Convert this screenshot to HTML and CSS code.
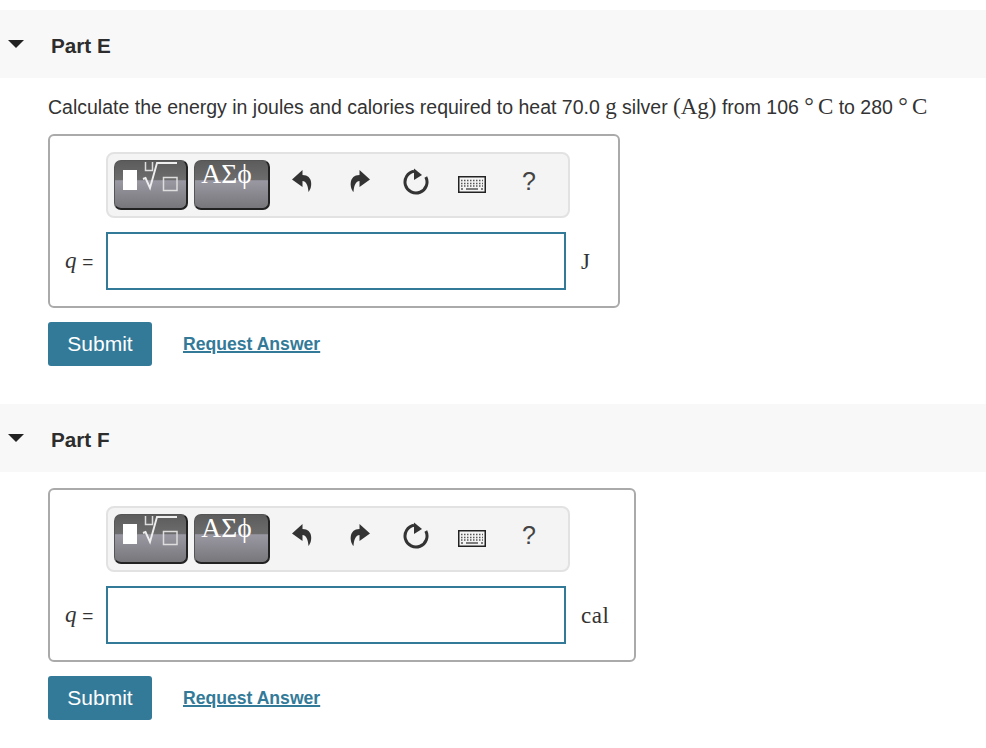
FILE: index.html
```html
<!DOCTYPE html>
<html>
    <head>
        <meta charset="UTF-8">
        <title>Part E and F</title>
        <link rel="stylesheet" href="styles.css">
    </head>

    <body>
        <svg class="defs" width="0" height="0">
            <defs>
                <symbol id="i-undo" viewBox="0 0 24 24">
                    <path d="M11.500 1 L1 10.500 L11.500 18 V12 C15 12 17 16 17.500 23 C21.500 19 22.500 6 11.500 6 Z"/>
                </symbol>
                <symbol id="i-redo" viewBox="0 0 24 24">
                    <path d="M12.500 1 L23 10.500 L12.500 18 V12 C9 12 7 16 6.500 23 C2.500 19 1.500 6 12.500 6 Z"/>
                </symbol>
                <symbol id="i-reset" viewBox="0 0 26 28">
                    <path class="ring" d="M22.800 9 A11 11 0 1 1 11 3.200"/>
                    <path d="M11 0.500 L19 7 L11 12 Z"/>
                </symbol>
                <symbol id="i-keys" viewBox="0 0 28 17">
                    <rect class="case" x="0.750" y="0.750" width="26.500" height="15.500"/>
                    <path class="keys" d="M3 4.500 H25 M3 7.500 H25 M3 10 H25" stroke-dasharray="1.500 1.500"/>
                    <path class="keys" d="M3 13 H5 M8 13 H20 M23 13 H25"/>
                </symbol>
                <symbol id="i-tmpl" viewBox="0 0 74 50">
                    <rect class="t-solid" x="9" y="10" width="14" height="20"/>
                    <path class="t-line" d="M31.500 2 V10.500 H38.500 V2"/>
                    <path class="t-line t-root" d="M29 19 L31.500 18 L36 28 L43 3 H63"/>
                    <rect class="t-line" x="49.500" y="17.500" width="13.500" height="13"/>
                </symbol>
            </defs>
        </svg>

        <section class="part">
            <header class="part-head">
                <span class="caret"></span>
                <h2>Part E</h2>
            </header>
            <div class="part-body">
                <p class="prompt">Calculate the energy in joules and calories required to heat 70.0 <span class="math">g</span> silver <span class="math">(Ag)</span> from 106 <span class="math"><sup>°</sup>C</span> to 280 <span class="math"><sup>°</sup>C</span></p>
                <div class="answer-box">
                    <div class="toolbar">
                        <div class="tool-btn tmpl"><svg width="74" height="50"><use href="#i-tmpl"/></svg></div>
                        <div class="tool-btn greek">ΑΣϕ</div>
                        <svg class="ico undo" width="24" height="24"><use href="#i-undo"/></svg>
                        <svg class="ico redo" width="24" height="24"><use href="#i-redo"/></svg>
                        <svg class="ico reset" width="26" height="28"><use href="#i-reset"/></svg>
                        <svg class="ico keyb" width="28" height="17"><use href="#i-keys"/></svg>
                        <span class="help">?</span>
                    </div>
                    <label class="var"><i>q</i> <span class="eq">=</span></label>
                    <input class="answer" type="text">
                    <span class="unit">J</span>
                </div>
                <div class="actions">
                    <button class="submit">Submit</button>
                    <a class="req" href="#">Request Answer</a>
                </div>
            </div>
        </section>

        <section class="part">
            <header class="part-head">
                <span class="caret"></span>
                <h2>Part F</h2>
            </header>
            <div class="part-body">
                <div class="answer-box">
                    <div class="toolbar">
                        <div class="tool-btn tmpl"><svg width="74" height="50"><use href="#i-tmpl"/></svg></div>
                        <div class="tool-btn greek">ΑΣϕ</div>
                        <svg class="ico undo" width="24" height="24"><use href="#i-undo"/></svg>
                        <svg class="ico redo" width="24" height="24"><use href="#i-redo"/></svg>
                        <svg class="ico reset" width="26" height="28"><use href="#i-reset"/></svg>
                        <svg class="ico keyb" width="28" height="17"><use href="#i-keys"/></svg>
                        <span class="help">?</span>
                    </div>
                    <label class="var"><i>q</i> <span class="eq">=</span></label>
                    <input class="answer" type="text">
                    <span class="unit">cal</span>
                </div>
                <div class="actions">
                    <button class="submit">Submit</button>
                    <a class="req" href="#">Request Answer</a>
                </div>
            </div>
        </section>
    </body>
</html>
```

FILE: styles.css
```css
*{
    box-sizing: border-box;
}

body{
    margin: 0;
    padding-top: 10px;
    background-color: #fff;
    color: #333;
    font-family: "Liberation Sans", Arial, sans-serif;
}

.defs{
    display: block;
    height: 0;
}

/* Part headers */
.part{
    margin-bottom: 38px;
}

.part-head{
    display: flex;
    align-items: center;
    height: 68px;
    padding-left: 8px;
    background-color: #f8f8f8;
}

.caret{
    width: 0;
    height: 0;
    border-left: 8px solid transparent;
    border-right: 8px solid transparent;
    border-top: 8px solid #222;
}

.part-head h2{
    margin: 4px 0 0 27px;
    font-size: 20.700px;
    font-weight: bold;
    color: #2d2d2d;
}

.part-body{
    padding: 16px 0 0 48px;
}

.prompt{
    margin: 0 0 14px;
    font-size: 19.500px;
    line-height: 26px;
    white-space: nowrap;
}

.math{
    font-family: "Liberation Serif", serif;
    font-size: 23px;
}

.math sup{
    margin-right: 4px;
    font-size: 24px;
    line-height: 0;
    vertical-align: 0;
}

/* Answer box */
.answer-box{
    display: grid;
    grid-template-columns: 26px 460px auto;
    column-gap: 15px;
    align-items: center;
    width: fit-content;
    padding: 16px 25px 16px 15px;
    border: 2px solid #aaa;
    border-radius: 6px;
}

.toolbar{
    grid-column: 2 / 4;
    display: flex;
    align-items: flex-start;
    width: 464px;
    height: 66px;
    margin-bottom: 14px;
    padding: 6px;
    background-color: #f4f4f4;
    border: 2px solid #e2e2e2;
    border-radius: 8px;
}

.tool-btn{
    height: 50px;
    border: 1px solid #555;
    border-right: 2px solid #222;
    border-bottom: 2px solid #222;
    border-radius: 7px;
    background: linear-gradient(#5c5c5c 0, #6c6c6c 40%, #9a98a2 42%, #77777b 100%);
    color: #fff;
}

.tmpl{
    width: 74px;
    margin-right: 6px;
}

.tmpl svg{
    display: block;
    margin: -1px 0 0 -1px;
}

.t-solid{
    fill: #fff;
}

.t-line{
    fill: none;
    stroke: #ddd;
    stroke-width: 1.500;
}

.t-root{
    stroke: #eee;
    stroke-width: 1.900;
}

.greek{
    width: 76px;
    padding-right: 10px;
    font-family: "Liberation Serif", serif;
    font-size: 27.500px;
    line-height: 26px;
    text-align: center;
}

.ico{
    flex: none;
    fill: #333;
}

.undo{
    margin: 9px 0 0 21px;
}

.redo{
    margin: 9px 0 0 32px;
}

.reset{
    margin: 8px 0 0 32px;
}

.ring{
    fill: none;
    stroke: #333;
    stroke-width: 3;
}

.keyb{
    margin: 16px 0 0 29px;
}

.case{
    fill: none;
    stroke: #222;
    stroke-width: 1.500;
}

.keys{
    fill: none;
    stroke: #555;
    stroke-width: 1.500;
}

.help{
    margin: 7px 0 0 36px;
    font-size: 25px;
    line-height: 28px;
    color: #444;
}

.var{
    font-family: "Liberation Serif", serif;
    font-size: 23px;
    white-space: nowrap;
}

.eq{
    font-family: "Liberation Sans", Arial, sans-serif;
    font-size: 19px;
}

.answer{
    width: 460px;
    height: 58px;
    border: 2px solid #337a99;
    background-color: #fff;
    outline: none;
}

.unit{
    min-width: 12px;
    padding-top: 2px;
    font-family: "Liberation Serif", serif;
    font-size: 23px;
    letter-spacing: 0.500px;
    color: #333;
}

/* Buttons under the box */
.actions{
    display: flex;
    align-items: center;
    margin-top: 14px;
}

.submit{
    width: 104px;
    height: 44px;
    border: none;
    border-radius: 3px;
    background-color: #337a99;
    color: #fff;
    font-family: "Liberation Sans", Arial, sans-serif;
    font-size: 21px;
}

.req{
    margin-left: 31px;
    font-size: 17.600px;
    font-weight: bold;
    color: #337a99;
    text-decoration-thickness: 2px;
}
```
